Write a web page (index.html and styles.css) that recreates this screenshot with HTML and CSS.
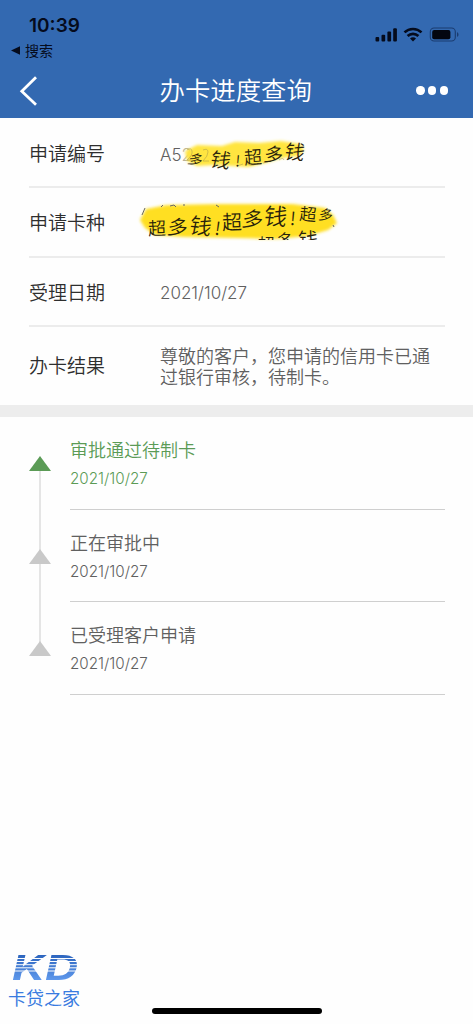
FILE: index.html
```html
<!DOCTYPE html>
<html lang="zh-CN">
<head>
<meta charset="utf-8">
<title>办卡进度查询</title>
<link rel="stylesheet" href="styles.css">
</head>
<body>
<div class="screen">
  <header class="header">
    <div class="status">
      <div class="status-left">
        <div class="clock">10:39</div>
        <div class="return"><svg width="10" height="9" viewBox="0 0 10 9"><path d="M0 4.5L9 .3v8.4z"/></svg><span>搜索</span></div>
      </div>
      <svg class="status-icons" width="84" height="16" viewBox="0 0 84 16">
        <g fill="#050b1c">
          <rect x="0.5" y="10" width="3.7" height="4.6" rx="1"/>
          <rect x="6.5" y="7.7" width="3.7" height="6.9" rx="1"/>
          <rect x="12.4" y="4.5" width="3.7" height="10.1" rx="1"/>
          <rect x="18.2" y="1.2" width="3.7" height="13.4" rx="1"/>
          <path d="M38 14.6l-3-3a4.2 4.2 0 0 1 6 0z"/>
        </g>
        <g fill="none" stroke="#050b1c" stroke-width="2.6">
          <path d="M29.5 5.4a12.2 12.2 0 0 1 17 0"/>
          <path d="M32.6 9a7.8 7.8 0 0 1 10.8 0"/>
        </g>
        <rect x="55.3" y="1" width="25" height="13" rx="3.8" fill="none" stroke="#1b3c70" stroke-width="1.1"/>
        <rect x="57.2" y="3" width="18.2" height="9.2" rx="2" fill="#030610"/>
        <path d="M82 5.2c2 .6 2 4 0 4.6z" fill="#1b3c70"/>
      </svg>
    </div>
    <nav class="nav">
      <svg class="back" width="20" height="30" viewBox="0 0 20 30"><path d="M17 1.3L2.8 15.3 17 28.7" fill="none" stroke="#fff" stroke-width="2.8"/></svg>
      <h1 class="title">办卡进度查询</h1>
      <div class="more"><i></i><i></i><i></i></div>
    </nav>
  </header>

  <section class="details">
    <div class="row">
      <div class="label">申请编号</div>
      <div class="value number">A5<span class="faded">2</span>
        <svg class="scribble first" width="130" height="40" viewBox="180 133 130 40">
          <defs><filter id="soft"><feGaussianBlur stdDeviation="1.7"/></filter></defs>
          <path filter="url(#soft)" fill="#ffe540" d="M185 149l12-6 25 1 13-4 24 1 22-2 19 3 4 6-5 6-17 2-17 5-17 4-16-1-18-1-17 1-10-5z"/>
          <g stroke="#a99a4a" stroke-width=".9" fill="none" opacity=".6"><path d="M187 148q4-3 5 1t-5 9h6M203 148q5-2 5 2t-5 9h6M214 161q6 6 12 2M237 164l6-2M246 161q5 4 10 1M263 161l8-2M279 158q4-3 5 0"/></g>
          <g class="hand">
            <text transform="translate(196 157) rotate(12) skewX(-12)" font-size="14">多</text>
            <text transform="translate(221 157) rotate(6) skewX(-8)" font-size="20">钱</text>
            <text transform="translate(238 158) rotate(5)" font-size="15">!</text>
            <text transform="translate(253 154) rotate(-4)" font-size="18">超</text>
            <text transform="translate(274 151) rotate(4) skewX(-8)" font-size="19">多</text>
            <text transform="translate(295 149) rotate(3) skewX(-8)" font-size="20">钱</text>
          </g>
        </svg>
      </div>
    </div>
    <div class="row">
      <div class="label">申请卡种</div>
      <div class="value">
        <svg class="scribble second" width="210" height="50" viewBox="133 198 210 50">
          <defs><clipPath id="lower"><path d="M240 229h90l-8 10h-82z"/></clipPath></defs>
          <path filter="url(#soft)" fill="#ffdf22" d="M140 219l6-11 21-4 54-1 71 0 33 4 8 7 4 8-9 7-20 6-31 3-38-1-54-1-30-2-10-7z"/>
          <g stroke="#666" stroke-width="1" fill="none"><path d="M145 207l-3 7M161 206l2-2M170 205l4-1 2 2M183 204h2M216 204l3 2M333 224l1 2"/></g>
          <g class="hand">
            <text transform="translate(157 226) rotate(-2)" font-size="18">超</text>
            <text transform="translate(178 225) rotate(4) skewX(-8)" font-size="20">多</text>
            <text transform="translate(201 223) rotate(5) skewX(-6)" font-size="22">钱</text>
            <text transform="translate(218 226) rotate(8)" font-size="18">!</text>
            <text transform="translate(232 220) rotate(-2)" font-size="20">超</text>
            <text transform="translate(253 217) rotate(4) skewX(-8)" font-size="21">多</text>
            <text transform="translate(276 214) rotate(2) skewX(-6)" font-size="23">钱</text>
            <text transform="translate(293 216) rotate(5)" font-size="18">!</text>
            <text transform="translate(308 212) rotate(5)" font-size="17">超</text>
            <text transform="translate(326 213) rotate(5) skewX(-8)" font-size="14">多</text>
            <g clip-path="url(#lower)">
              <text x="266" y="242" font-size="17">超</text>
              <text x="285" y="239" font-size="18">多</text>
              <text x="308" y="238" font-size="20">钱</text>
            </g>
          </g>
        </svg>
      </div>
    </div>
    <div class="row">
      <div class="label">受理日期</div>
      <div class="value date">2021/10/27</div>
    </div>
    <div class="row result">
      <div class="label">办卡结果</div>
      <div class="value">尊敬的客户，您申请的信用卡已通<br>过银行审核，待制卡。</div>
    </div>
  </section>

  <ol class="timeline">
    <li class="step current">
      <div class="marker"><svg width="22" height="15" viewBox="0 0 22 15"><path d="M11 0l11 15H0z"/></svg></div>
      <div class="step-body"><div class="step-name">审批通过待制卡</div><div class="step-date">2021/10/27</div></div>
    </li>
    <li class="step">
      <div class="marker"><svg width="22" height="15" viewBox="0 0 22 15"><path d="M11 0l11 15H0z"/></svg></div>
      <div class="step-body"><div class="step-name">正在审批中</div><div class="step-date">2021/10/27</div></div>
    </li>
    <li class="step">
      <div class="marker"><svg width="22" height="15" viewBox="0 0 22 15"><path d="M11 0l11 15H0z"/></svg></div>
      <div class="step-body"><div class="step-name">已受理客户申请</div><div class="step-date">2021/10/27</div></div>
    </li>
  </ol>

  <footer class="footer">
    <div class="brand">
      <svg width="70" height="26" viewBox="0 0 70 26">
        <defs>
          <linearGradient id="blue" x1="0" y1="0" x2="0" y2="1"><stop offset="0" stop-color="#1d55b0"/><stop offset="1" stop-color="#6ea8fa"/></linearGradient>
          <mask id="stripes"><rect width="70" height="26" fill="#fff"/><path d="M0 3.5h70M0 6.5h70M0 9.7h70M0 12.8h70M0 16h70" stroke="#000" stroke-width="1"/></mask>
        </defs>
        <g mask="url(#stripes)"><text class="logo" x="1" y="25" textLength="66" lengthAdjust="spacingAndGlyphs">KD</text></g>
      </svg>
      <div class="brand-name">卡贷之家</div>
    </div>
    <div class="home"></div>
  </footer>
</div>
</body>
</html>
```

FILE: styles.css
```css
* { box-sizing: border-box; }
body { margin: 0; background: #fefefe; font-family: Inter, "Noto Sans CJK SC", sans-serif; color: #333; }
.screen { width: 473px; height: 1024px; display: flex; flex-direction: column; overflow: hidden; }
.header { height: 118px; background: #3369b1; flex: none; }
.status { height: 63px; display: flex; justify-content: space-between; padding: 14px 14px 0 11px; color: #050b1c; }
.clock { padding-left: 18px; font-size: 19px; line-height: 24px; font-weight: 600; }
.return { display: flex; align-items: center; gap: 4px; height: 25px; font-size: 14px; line-height: 25px; font-weight: 400; }
.return svg { fill: #050b1c; }
.status-icons { margin-top: 13px; }
.nav { height: 55px; display: flex; align-items: center; justify-content: space-between; padding: 0 25px 0 19px; }
.title { margin: 0 0 0 16px; font-size: 25.4px; font-weight: 350; line-height: 55px; color: #fff; }
.more { display: flex; gap: 3.2px; }
.more i { width: 8.4px; height: 8.4px; border-radius: 50%; background: #fff; }
.details { padding: 1px 28px 0 29px; height: 299px; border-bottom: 12px solid #ededed; flex: none; }
.row { height: 69.3px; display: flex; align-items: center; padding-top: 5px; border-bottom: 2px solid #ececec; }
.row.result { height: 78px; padding-top: 3px; border-bottom: 0; }
.label { width: 131px; font-size: 19px; line-height: 28px; color: #2e2e2e; font-weight: 350; }
.value { position: relative; font-size: 18px; line-height: 21px; color: #606060; font-weight: 350; white-space: nowrap; }
.value.date, .value.number { font-size: 17px; }
.faded { color: #b6b09a; }
.scribble { position: absolute; }
.scribble.first { left: 20px; top: -10px; }
.scribble.second { left: -27px; top: -25px; }
.hand { font-family: "Noto Sans CJK SC", sans-serif; font-weight: 350; fill: #28220b; text-anchor: middle; dominant-baseline: central; }
.timeline { list-style: none; margin: 0; padding: 0 28px 0 29px; }
.step { height: 92.6px; display: flex; }
.marker { width: 41px; padding-top: 39px; background: linear-gradient(#e5e5e5, #e5e5e5) 10px 0 / 2px 100% no-repeat; }
.marker svg { display: block; fill: #c9c9c9; }
.step:first-child .marker { background-position: 10px 54px; }
.step:last-child .marker { background-size: 2px 40px; }
.current .marker svg { fill: #5b9b56; }
.step-body { flex: 1; border-bottom: 1px solid #cfcfcf; padding-top: 20px; color: #606060; }
.step-name { font-size: 18px; line-height: 28px; font-weight: 350; }
.step-date { font-size: 15.2px; line-height: 20px; padding-top: 4px; font-weight: 350; }
.current .step-body { color: #5b9b56; }
.footer { margin-top: auto; height: 73px; display: flex; flex: none; }
.brand { width: 152px; padding: 4px 0 0 8px; }
.brand svg { display: block; margin-left: 3px; }
.logo { font: italic 700 34px Inter, sans-serif; fill: url(#blue); }
.brand-name { font-size: 18px; line-height: 26px; color: #397be0; margin-top: 5px; }
.home { width: 170px; height: 6px; border-radius: 3px; background: #000; margin-top: 57px; }
```
